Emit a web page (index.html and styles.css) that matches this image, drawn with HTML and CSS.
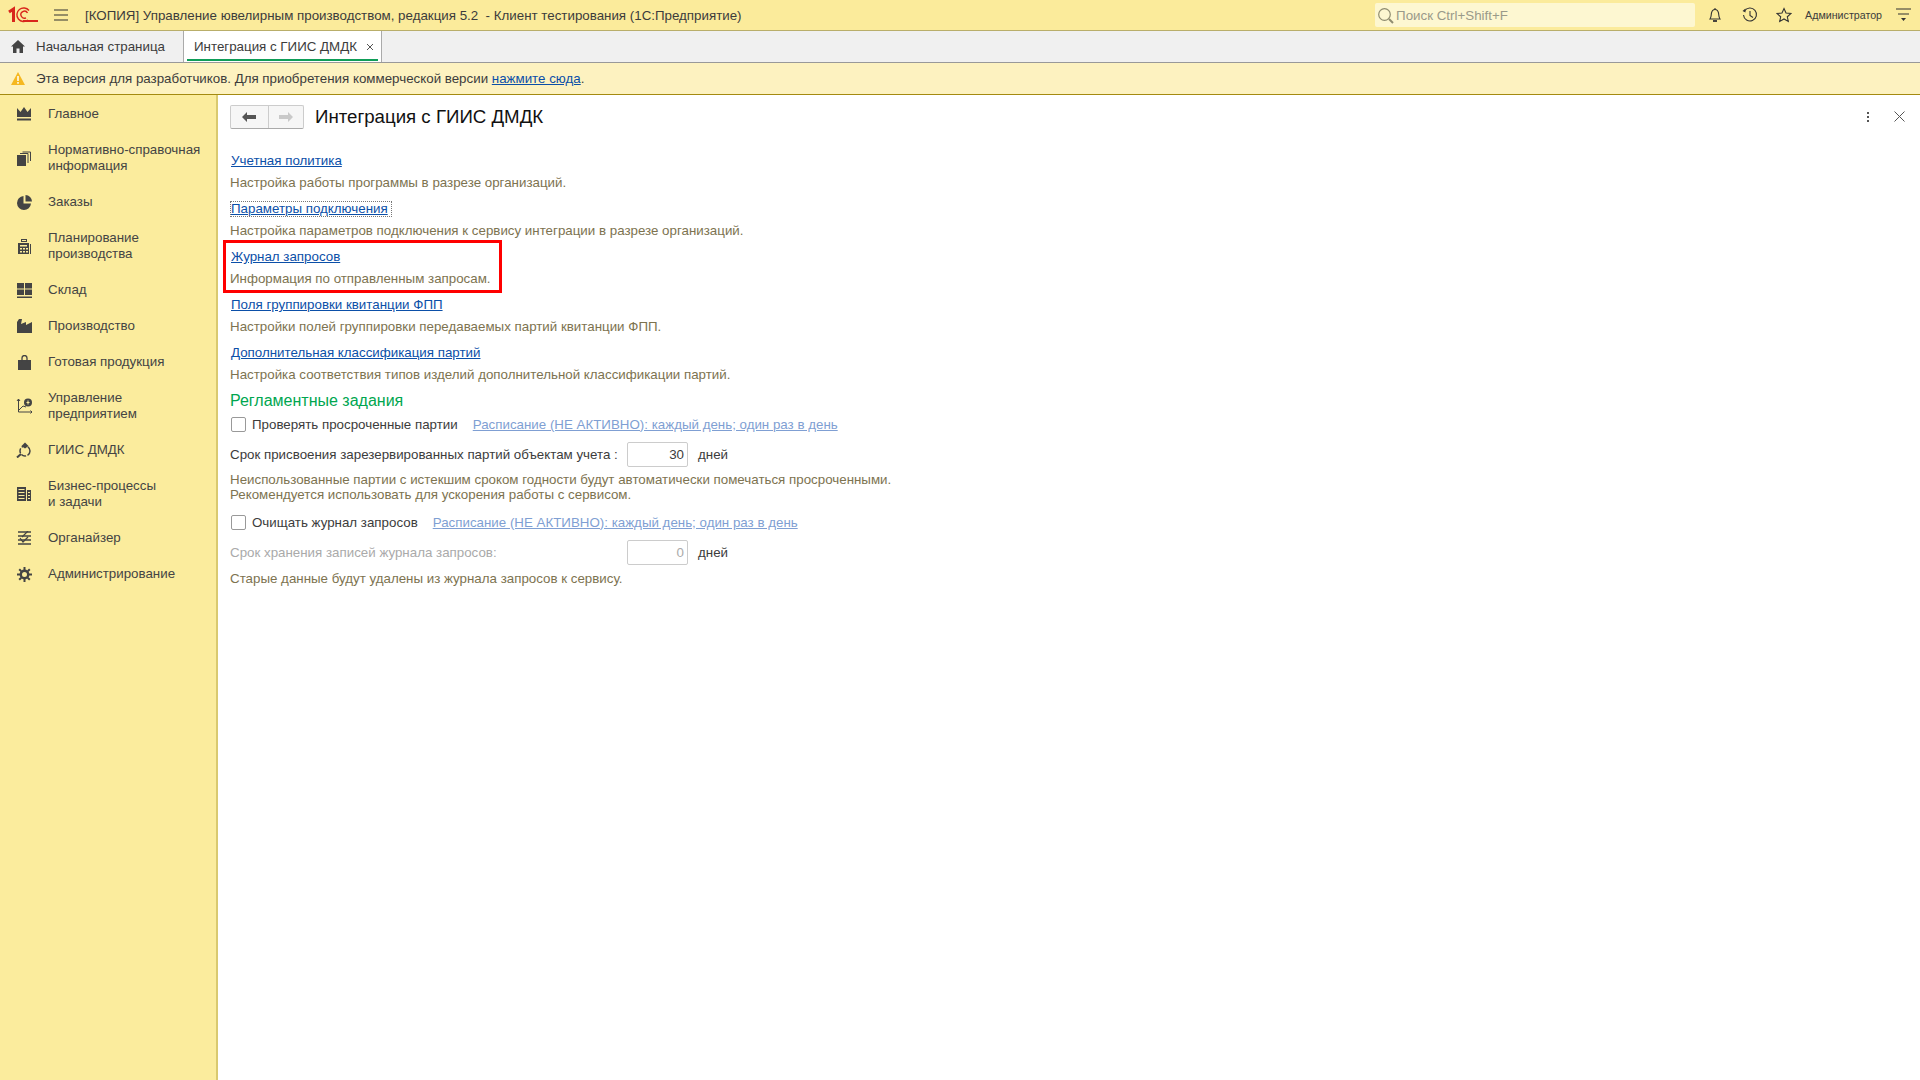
FILE: index.html
```html
<!DOCTYPE html>
<html lang="ru">
<head>
    <meta charset="UTF-8">
    <title>Интеграция с ГИИС ДМДК</title>
    <link rel="stylesheet" href="styles.css">
</head>
<body>
<header class="topbar">
    <svg class="logo" width="30" height="18" viewBox="0 0 30 18" fill="none" stroke="#d9261c">
        <path d="M1 6 L5.500 3 V16" stroke-width="3"/>
        <path d="M21 4.500 A6.800 6.800 0 1 0 20 14" stroke-width="1.400"/>
        <path d="M19.500 7 A3.500 3.500 0 1 0 18 11.800" stroke-width="1.400"/>
        <path d="M15 15 H30" stroke-width="2"/>
    </svg>
    <svg class="burger" width="14" height="12" viewBox="0 0 14 12" stroke="#333"><path d="M0 1 H14 M0 6 H14 M0 11 H14" stroke-width="1.2"/></svg>
    <div class="app-title">[КОПИЯ] Управление ювелирным производством, редакция 5.2&nbsp; - Клиент тестирования (1С:Предприятие)</div>
    <div class="search">
        <svg width="17" height="17" viewBox="0 0 17 17" fill="none" stroke="#8f8c70" stroke-width="1.2"><circle cx="7.5" cy="7.5" r="5.8"/><path d="M12 12 L16 16" stroke-width="2"/></svg>
        <span>Поиск Ctrl+Shift+F</span>
    </div>
    <svg class="tool tool-bell" width="16" height="16" viewBox="0 0 16 16" fill="none" stroke="#333" stroke-width="1.1"><path d="M3 12 C4.5 10 4 8 4.5 6 C5 3.5 6.500 2.500 8 2.500 C9.500 2.500 11 3.500 11.500 6 C12 8 11.500 10 13 12 Z"/><path d="M8 1 V2.500"/><path d="M6 14 H10" stroke-width="1.800"/></svg>
    <svg class="tool" width="17" height="16" viewBox="0 0 17 16" fill="none" stroke="#333" stroke-width="1.1"><path d="M3.500 4 A6.500 6.500 0 1 1 2.500 8"/><path d="M1.500 4 L4.500 1.500 V5.500 Z" fill="#333" stroke="none"/><path d="M9 4 V8.500 L12 10.500"/></svg>
    <svg class="tool" width="16" height="16" viewBox="0 0 16 16" fill="none" stroke="#333" stroke-width="1.1"><path d="M8 1.500 L10 6 L15 6.500 L11.300 9.800 L12.300 14.500 L8 12 L3.700 14.500 L4.700 9.800 L1 6.500 L6 6 Z"/></svg>
    <div class="user">Администратор</div>
    <svg class="user-menu" width="15" height="14" viewBox="0 0 15 14" stroke="#333"><path d="M0 1 H15 M2 6 H13" stroke-width="1.100"/><path d="M5 10 H10 L7.500 13 Z" fill="#333" stroke="none"/></svg>
</header>

<nav class="tabs">
    <div class="tab tab-home">
        <svg width="14" height="13" viewBox="0 0 14 13" fill="#444"><path d="M7 0 L14 6.500 H12 V13 H8.500 V8.500 H5.500 V13 H2 V6.500 H0 Z"/></svg>
        <span>Начальная страница</span>
    </div>
    <div class="tab tab-active">
        <span>Интеграция с ГИИС ДМДК</span>
        <svg width="8" height="8" viewBox="0 0 8 8" stroke="#555"><path d="M1 1 L7 7 M7 1 L1 7" stroke-width="1"/></svg>
    </div>
</nav>

<div class="notice">
    <svg width="14" height="13" viewBox="0 0 14 13"><path d="M7 0 L14 13 H0 Z" fill="#f5b821"/><path d="M7 4 V9 M7 10 V11.800" stroke="#fff" stroke-width="1.500"/></svg>
    <span>Эта версия для разработчиков. Для приобретения коммерческой версии <a href="#">нажмите сюда</a>.</span>
</div>

<div class="workspace">
    <aside class="sidebar">
        <div class="side-item">
            <svg width="16" height="14" viewBox="0 0 16 14" fill="#444"><path d="M1 1 L4.500 5 L8 0 L11.500 5 L15 1 V10 H1 Z"/><path d="M1 11.500 H15 V13.500 H1 Z"/></svg>
            <span>Главное</span>
        </div>
        <div class="side-item">
            <svg width="14" height="15" viewBox="0 0 14 15" fill="#444"><path d="M0 4 H9 V15 H0 Z"/><path d="M3 2.500 H11 V12 M5.500 1 H13.500 V10" fill="none" stroke="#444"/></svg>
            <span>Нормативно-справочная<br>информация</span>
        </div>
        <div class="side-item">
            <svg width="15" height="15" viewBox="0 0 15 15" fill="#444"><path d="M6.500 1 V8.500 H14 A7 7 0 1 1 6.500 1 Z"/><path d="M8.500 0 A6.500 6.500 0 0 1 15 6.500 H8.500 Z"/></svg>
            <span>Заказы</span>
        </div>
        <div class="side-item">
            <svg width="13" height="15" viewBox="0 0 13 15" fill="#444"><path d="M3 0 H9 V3 H3 Z M4 1 V2 H8 V1 Z" fill-rule="evenodd"/><path d="M0 4 H11 V15 H0 Z M2 9 V10.500 H4 V9 Z M5 9 V10.500 H7 V9 Z M8 9 V10.500 H10 V9 Z M2 12 V13.500 H4 V12 Z M5 12 V13.500 H7 V12 Z M8 12 V13.500 H10 V12 Z M2 6 V7.500 H9 V6 Z" fill-rule="evenodd"/><path d="M12 5 H13 V15 H12 Z"/></svg>
            <span>Планирование<br>производства</span>
        </div>
        <div class="side-item">
            <svg width="15" height="15" viewBox="0 0 15 15" fill="#444"><path d="M0 0 H7 V5.500 H0 Z M8 0 H15 V5.500 H8 Z M0 6.500 H7 V12 H0 Z M8 6.500 H15 V12 H8 Z M0 13.500 H15 V15 H0 Z"/></svg>
            <span>Склад</span>
        </div>
        <div class="side-item">
            <svg width="15" height="14" viewBox="0 0 15 14" fill="#444"><path d="M0 14 V3 L2 0 H5 L4 5 L9 3 V6 L15 3 V14 Z"/></svg>
            <span>Производство</span>
        </div>
        <div class="side-item">
            <svg width="13" height="15" viewBox="0 0 13 15" fill="#444"><path d="M0 5 H13 V15 H0 Z"/><path d="M4 7 V3 A2.500 2.500 0 0 1 9 3 V7" fill="none" stroke="#444" stroke-width="1.300"/></svg>
            <span>Готовая продукция</span>
        </div>
        <div class="side-item">
            <svg width="17" height="16" viewBox="0 0 17 16" fill="none" stroke="#444"><path d="M2.500 1 V14 H16"/><path d="M1 3 L2.500 1 L4 3 M14.500 12.500 L16 14 L14.500 15.500"/><path d="M3 12 L7 8 L10 9"/><circle cx="12" cy="4.500" r="4" fill="#444" stroke="none"/><path d="M12 2.500 V6.500 M10.500 4.500 H13.500" stroke="#fbec9d"/></svg>
            <span>Управление<br>предприятием</span>
        </div>
        <div class="side-item">
            <svg width="16" height="16" viewBox="0 0 16 16" fill="none" stroke="#444" stroke-width="1.500"><circle cx="9" cy="9" r="5" stroke-dasharray="5 1.500"/><path d="M5 12 L1 15.500" stroke-width="2"/><path d="M5.500 4 L9 0.500 L12.500 4 L9 6.500 Z" fill="#444" stroke="none"/></svg>
            <span>ГИИС ДМДК</span>
        </div>
        <div class="side-item">
            <svg width="14" height="14" viewBox="0 0 14 14" fill="#444"><path d="M0 0 H9 V14 H0 Z M1.500 2 V3 H7.500 V2 Z M1.500 5 V6 H7.500 V5 Z M1.500 8 V9 H7.500 V8 Z M1.500 11 V12 H7.500 V11 Z" fill-rule="evenodd"/><path d="M10 3 H14 V14 H10 Z M11 5 V6 H13 V5 Z M11 8 V9 H13 V8 Z M11 11 V12 H13 V11 Z" fill-rule="evenodd"/></svg>
            <span>Бизнес-процессы<br>и задачи</span>
        </div>
        <div class="side-item">
            <svg width="15" height="14" viewBox="0 0 15 14" fill="none" stroke="#444" stroke-width="1.600"><path d="M1 1 H14 M1 5 H14 M1 9 H14 M1 13 H14"/><path d="M11 0 L5 6 M3 7 L6 11 L11 6" stroke-width="1.200"/></svg>
            <span>Органайзер</span>
        </div>
        <div class="side-item">
            <svg width="15" height="15" viewBox="0 0 15 15" fill="none" stroke="#444"><circle cx="7.500" cy="7.500" r="3.700" stroke-width="2.400"/><path d="M7.500 0 V3 M7.500 12 V15 M0 7.500 H3 M12 7.500 H15 M2.200 2.200 L4.300 4.300 M10.700 10.700 L12.800 12.800 M12.800 2.200 L10.700 4.300 M4.300 10.700 L2.200 12.800" stroke-width="2"/></svg>
            <span>Администрирование</span>
        </div>
    </aside>

    <main class="content">
        <div class="page-head">
            <div class="nav-buttons">
                <button class="nav-btn">
                    <svg width="14" height="10" viewBox="0 0 14 10" fill="#555"><path d="M0 5 L5 0 V3 H14 V7 H5 V10 Z"/></svg>
                </button>
                <button class="nav-btn">
                    <svg width="14" height="10" viewBox="0 0 14 10" fill="#c9c9c9"><path d="M14 5 L9 0 V3 H0 V7 H9 V10 Z"/></svg>
                </button>
            </div>
            <h1>Интеграция с ГИИС ДМДК</h1>
            <svg class="head-more" width="2" height="10" viewBox="0 0 2 10" fill="#555"><path d="M0 0 H2 V2 H0 Z M0 4 H2 V6 H0 Z M0 8 H2 V10 H0 Z"/></svg>
            <svg class="head-close" width="11" height="11" viewBox="0 0 11 11" stroke="#555"><path d="M0.500 0.500 L10.500 10.500 M10.500 0.500 L0.500 10.500"/></svg>
        </div>

        <div class="item">
            <a href="#">Учетная политика</a>
            <p>Настройка работы программы в разрезе организаций.</p>
        </div>
        <div class="item">
            <a href="#" class="focused">Параметры подключения</a>
            <p>Настройка параметров подключения к сервису интеграции в разрезе организаций.</p>
        </div>
        <div class="item">
            <a href="#">Журнал запросов</a>
            <p>Информация по отправленным запросам.</p>
            <div class="red-frame"></div>
        </div>
        <div class="item">
            <a href="#">Поля группировки квитанции ФПП</a>
            <p>Настройки полей группировки передаваемых партий квитанции ФПП.</p>
        </div>
        <div class="item">
            <a href="#">Дополнительная классификация партий</a>
            <p>Настройка соответствия типов изделий дополнительной классификации партий.</p>
        </div>

        <h2>Регламентные задания</h2>

        <div class="check-row">
            <span class="checkbox"></span>
            <span class="check-label">Проверять просроченные партии</span>
            <a href="#" class="schedule">Расписание (НЕ АКТИВНО): каждый день; один раз в день</a>
        </div>
        <div class="field-row">
            <span class="field-label">Срок присвоения зарезервированных партий объектам учета :</span>
            <span class="field-input">30</span>
            <span class="field-unit">дней</span>
        </div>
        <p class="note">Неиспользованные партии с истекшим сроком годности будут автоматически помечаться просроченными.<br>Рекомендуется использовать для ускорения работы с сервисом.</p>

        <div class="check-row check-row-second">
            <span class="checkbox"></span>
            <span class="check-label">Очищать журнал запросов</span>
            <a href="#" class="schedule">Расписание (НЕ АКТИВНО): каждый день; один раз в день</a>
        </div>
        <div class="field-row">
            <span class="field-label disabled">Срок хранения записей журнала запросов:</span>
            <span class="field-input disabled">0</span>
            <span class="field-unit">дней</span>
        </div>
        <p class="note note-last">Старые данные будут удалены из журнала запросов к сервису.</p>
    </main>
</div>
</body>
</html>
```

FILE: styles.css
```css
html, body {
    margin: 0;
    padding: 0;
    height: 100%;
    overflow: hidden;
}

body {
    font-family: "Liberation Sans", Arial, sans-serif;
    font-size: 13.33px;
    color: #3c3c3c;
    background-color: #fff;
    display: flex;
    flex-direction: column;
}

/* top bar */
.topbar {
    height: 30px;
    flex: none;
    display: flex;
    align-items: center;
    background-color: #fbeb9b;
    border-bottom: 1px solid #b9ae6a;
}

.logo {
    margin-left: 8px;
}

.burger {
    margin-left: 16px;
}

.app-title {
    margin-left: 17px;
    flex: 1;
}

.search {
    width: 320px;
    height: 24px;
    display: flex;
    align-items: center;
    gap: 2px;
    padding-left: 2px;
    box-sizing: border-box;
    background-color: #fdf7d1;
    border-radius: 2px;
    color: #9a9a8a;
}

.tool {
    margin-left: 18px;
}

.tool-bell {
    margin-left: 12px;
}

.user {
    margin-left: 13px;
    font-size: 10.67px;
}

.user-menu {
    margin-left: 14px;
    margin-right: 9px;
}

/* tabs */
.tabs {
    height: 31px;
    flex: none;
    display: flex;
    background-color: #f0f0f0;
    border-bottom: 1px solid #999;
}

.tab {
    display: flex;
    align-items: center;
}

.tab-home {
    width: 184px;
    padding-left: 11px;
    gap: 11px;
    box-sizing: border-box;
    border-right: 1px solid #aaa;
}

.tab-active {
    width: 198px;
    padding-left: 10px;
    gap: 9px;
    box-sizing: border-box;
    background-color: #fff;
    border-right: 1px solid #aaa;
    position: relative;
}

.tab-active::after {
    content: "";
    position: absolute;
    left: 3px;
    right: 3px;
    bottom: 1px;
    height: 2px;
    background-color: #0f9d58;
}

/* notice */
.notice {
    height: 31px;
    flex: none;
    display: flex;
    align-items: center;
    gap: 11px;
    padding-left: 11px;
    background-color: #fdf2c0;
    border-bottom: 1px solid #a48a10;
}

.notice a {
    color: #0b4fa8;
}

/* sidebar */
.workspace {
    flex: 1;
    display: flex;
    min-height: 0;
}

.sidebar {
    width: 218px;
    flex: none;
    box-sizing: border-box;
    padding-top: 1px;
    background-color: #fbec9d;
    border-right: 2px solid #d9c96f;
}

.side-item {
    display: grid;
    grid-template-columns: 18px 1fr;
    column-gap: 15px;
    align-items: center;
    min-height: 36px;
    padding-left: 15px;
    line-height: 16px;
    color: #444;
}

.side-item:has(br) {
    min-height: 52px;
}

.side-item svg {
    justify-self: center;
}

/* content */
.content {
    flex: 1;
    padding-left: 12px;
}

.page-head {
    height: 43px;
    display: flex;
    align-items: center;
    margin-bottom: 12px;
}

.nav-buttons {
    display: flex;
    height: 24px;
    width: 74px;
    box-sizing: border-box;
    border: 1px solid #ccc;
    border-bottom-color: #aaa;
    border-radius: 2px;
    background-color: #f6f6f6;
}

.nav-btn {
    flex: 1;
    padding: 0 1px 0 0;
    border: 0;
    background: none;
    display: flex;
    align-items: center;
    justify-content: center;
}

.nav-btn:first-child {
    border-right: 1px solid #ccc;
    flex: 1.1;
}

h1 {
    margin: 0 0 0 11px;
    font-size: 18.67px;
    font-weight: normal;
    color: #111;
    flex: 1;
}

.head-more {
    margin-right: 25px;
}

.head-close {
    margin-right: 15px;
}

.item {
    position: relative;
    height: 48px;
    display: flow-root;
}

.item a {
    display: block;
    width: fit-content;
    margin-left: 1px;
    line-height: 22px;
    color: #0b4fa8;
}

.item a.focused {
    line-height: 14px;
    margin-top: 4px;
    margin-bottom: 4px;
    outline: 1px dotted #777;
    padding-right: 3px;
}

.item p {
    margin: 0;
    line-height: 22px;
    color: #7d7350;
}

.red-frame {
    position: absolute;
    left: -7px;
    top: -6px;
    width: 279px;
    height: 53px;
    box-sizing: border-box;
    border: 3px solid #f00;
}

h2 {
    margin: 0;
    height: 22px;
    line-height: 22px;
    font-size: 16px;
    font-weight: normal;
    color: #00a650;
}

.check-row {
    height: 24px;
    display: flex;
    align-items: center;
}

.check-row-second {
    margin-top: 8px;
}

.checkbox {
    width: 13px;
    height: 13px;
    margin-left: 1px;
    border: 1px solid #999;
    border-radius: 2px;
    background-color: #fff;
}

.check-label {
    margin-left: 6px;
}

.schedule {
    margin-left: 15px;
    color: #7f9fd3;
}

.field-row {
    height: 25px;
    margin-top: 6px;
    display: flex;
    align-items: center;
}

.field-label {
    width: 397px;
}

.field-input {
    width: 61px;
    height: 25px;
    box-sizing: border-box;
    padding-right: 3px;
    line-height: 23px;
    text-align: right;
    border: 1px solid #ccc;
    border-radius: 2px;
}

.field-unit {
    margin-left: 10px;
}

.disabled {
    color: #aaa;
}

.note {
    margin: 5px 0 0;
    line-height: 15px;
    color: #7d7350;
}

.note-last {
    margin-top: 6px;
}
```
